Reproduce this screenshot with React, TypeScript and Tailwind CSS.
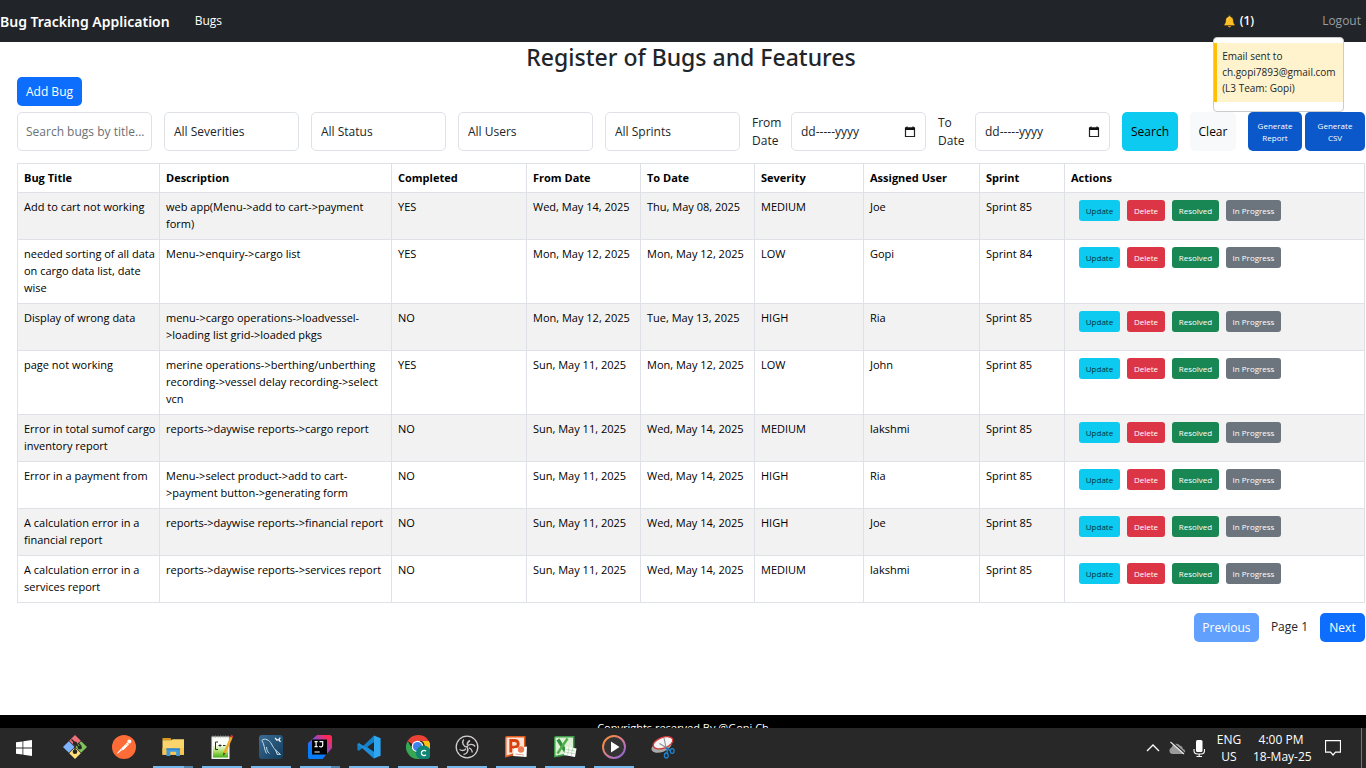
import type { ReactNode } from "react";

type Bug = {
  title: string;
  description: string;
  completed: string;
  from: string;
  to: string;
  severity: string;
  user: string;
  sprint: string;
};

const bugs: Bug[] = [
  { title: "Add to cart not working", description: "web app(Menu->add to cart->payment form)", completed: "YES", from: "Wed, May 14, 2025", to: "Thu, May 08, 2025", severity: "MEDIUM", user: "Joe", sprint: "Sprint 85" },
  { title: "needed sorting of all data on cargo data list, date wise", description: "Menu->enquiry->cargo list", completed: "YES", from: "Mon, May 12, 2025", to: "Mon, May 12, 2025", severity: "LOW", user: "Gopi", sprint: "Sprint 84" },
  { title: "Display of wrong data", description: "menu->cargo operations->loadvessel->loading list grid->loaded pkgs", completed: "NO", from: "Mon, May 12, 2025", to: "Tue, May 13, 2025", severity: "HIGH", user: "Ria", sprint: "Sprint 85" },
  { title: "page not working", description: "merine operations->berthing/unberthing recording->vessel delay recording->select vcn", completed: "YES", from: "Sun, May 11, 2025", to: "Mon, May 12, 2025", severity: "LOW", user: "John", sprint: "Sprint 85" },
  { title: "Error in total sumof cargo inventory report", description: "reports->daywise reports->cargo report", completed: "NO", from: "Sun, May 11, 2025", to: "Wed, May 14, 2025", severity: "MEDIUM", user: "lakshmi", sprint: "Sprint 85" },
  { title: "Error in a payment from", description: "Menu->select product->add to cart->payment button->generating form", completed: "NO", from: "Sun, May 11, 2025", to: "Wed, May 14, 2025", severity: "HIGH", user: "Ria", sprint: "Sprint 85" },
  { title: "A calculation error in a financial report", description: "reports->daywise reports->financial report", completed: "NO", from: "Sun, May 11, 2025", to: "Wed, May 14, 2025", severity: "HIGH", user: "Joe", sprint: "Sprint 85" },
  { title: "A calculation error in a services report", description: "reports->daywise reports->services report", completed: "NO", from: "Sun, May 11, 2025", to: "Wed, May 14, 2025", severity: "MEDIUM", user: "lakshmi", sprint: "Sprint 85" },
];

const columns = [
  { label: "Bug Title", width: "w-[142px]" },
  { label: "Description", width: "w-[232px]" },
  { label: "Completed", width: "w-[135px]" },
  { label: "From Date", width: "w-[114px]" },
  { label: "To Date", width: "w-[114px]" },
  { label: "Severity", width: "w-[109px]" },
  { label: "Assigned User", width: "w-[116px]" },
  { label: "Sprint", width: "w-[85px]" },
  { label: "Actions", width: "" },
];

const actions = [
  { label: "Update", style: "w-[41px] bg-[#0dcaf0] text-[#03323c]" },
  { label: "Delete", style: "w-[38px] bg-[#dc3545] text-white" },
  { label: "Resolved", style: "w-[47px] bg-[#198754] text-white" },
  { label: "In Progress", style: "w-[55px] bg-[#6c757d] text-white" },
];

const cell = "border border-[#dee2e6] pt-[5px] pr-[2px] pb-[7px] pl-[6px] text-left align-top";
const headCell = "border border-[#dee2e6] pt-[5px] pr-[2px] pb-[6px] pl-[6px] text-left font-bold";
const field = "h-[39px] min-w-0 flex-[1_1_135px] rounded-[5px] border border-[#dee2e6] bg-white";

function BellIcon() {
  return (
    <svg width="13" height="13" viewBox="0 0 13 13" aria-hidden="true">
      <path d="M6.5 0.6c.8 0 1.200.5 1.300 1.100 1.700.5 2.500 1.900 2.600 3.800.1 2 .6 3 1.500 4.200v1H1.100v-1c.9-1.200 1.400-2.200 1.500-4.200.1-1.900.9-3.300 2.600-3.800C5.300 1.100 5.700.6 6.500.6z" fill="#fcbf29" stroke="#15171a" strokeWidth=".6" />
      <path d="M4.900 11h3.200c-.2.900-.8 1.400-1.600 1.400S5.100 11.900 4.900 11z" fill="#e8921c" />
      <path d="M4 5c.1-1.200.6-2 1.500-2.400" stroke="#ffe27a" strokeWidth=".8" fill="none" />
    </svg>
  );
}

function Select({ label }: { label: string }) {
  return (
    <select aria-label={label} className={`${field} appearance-none px-[9px] text-[#212529]`}>
      <option>{label}</option>
    </select>
  );
}

function DateField({ id, label, width }: { id: string; label: string; width: string }) {
  return (
    <>
      <label htmlFor={id} className={`shrink-0 leading-[18px] ${width}`}>
        {label}
      </label>
      <div className={`${field} flex items-center px-[9px]`}>
        <input id={id} type="text" defaultValue="dd-----yyyy" className="min-w-0 flex-1 bg-transparent" />
        <button type="button" aria-label={`Pick ${label}`}>
          <svg width="12" height="12" viewBox="0 0 12 12" fill="none" className="block">
            <path d="M1.500 2h9v8.500h-9z" stroke="#222" strokeWidth="1.200" />
            <path d="M1 1.500h10V4H1z" fill="#111" />
            <path d="M3 0.400v2M9 0.400v2" stroke="#111" strokeWidth="1.300" />
          </svg>
        </button>
      </div>
    </>
  );
}

const apps: { name: string; state: "idle" | "open" | "stacked"; icon: ReactNode }[] = [
  {
    name: "Git Bash",
    state: "idle",
    icon: (
      <>
        <path d="M12 0l5.800 5.800L12 11.600 6.200 5.800z" fill="#ef7078" />
        <path d="M5.800 6.200l5.800 5.800-5.800 5.800L0 12z" fill="#80b3ff" />
        <path d="M18.200 6.200L24 12l-5.800 5.800-5.800-5.800z" fill="#7fc35a" />
        <path d="M12 12.400l5.800 5.800L12 24l-5.800-5.800z" fill="#ffe27c" />
        <path d="M8.500 4.500l3.500 3.500v8.500M12 8.500l4.500 4M15 8l3 3" stroke="#262626" strokeWidth="1.300" fill="none" />
        <circle cx="12" cy="8.500" r="2.100" fill="#262626" />
        <circle cx="12" cy="16.800" r="2.300" fill="#262626" />
        <circle cx="16.800" cy="12.500" r="2.100" fill="#262626" />
      </>
    ),
  },
  {
    name: "Postman",
    state: "idle",
    icon: (
      <>
        <circle cx="12" cy="12" r="12" fill="#ff6c37" />
        <circle cx="17.300" cy="6.400" r="2" fill="#fff" />
        <path d="M15.200 7.600l1.900 1.600-5.300 5.600-2.300.6-3.800 3.300-.7-.5 4.200-4.600z" fill="#fff" />
        <path d="M8.800 13.500l1.600 1.700M14 8.800l1.600 1.600" stroke="#ff9a72" strokeWidth=".7" />
      </>
    ),
  },
  {
    name: "File Explorer",
    state: "stacked",
    icon: (
      <>
        <path d="M1.500 3h8l1.500 2.500H1.500z" fill="#d99a1c" />
        <path d="M1.500 5.300h9l1.200-1.100H23v15.600H1.500z" fill="#fcd46c" />
        <path d="M1.500 13H23v6.800H1.500z" fill="#f8c650" />
        <path d="M5.500 21v-7.600H19V21h-3.800v-4.300H9.300V21z" fill="#3f9be0" />
        <path d="M5.500 13.400H19v1.500H5.500z" fill="#2f86cc" />
      </>
    ),
  },
  {
    name: "Notepad++",
    state: "open",
    icon: (
      <>
        <defs>
          <linearGradient id="npp" x1="0" y1="0" x2="0" y2="1">
            <stop offset=".35" stopColor="#fbfdf8" />
            <stop offset=".7" stopColor="#a8df5e" />
            <stop offset="1" stopColor="#44ad1c" />
          </linearGradient>
        </defs>
        <path d="M1.500 1.500h18V24h-18z" fill="#f4f4ee" />
        <path d="M3 3h15v19.500H3z" fill="url(#npp)" />
        <path d="M3 .5v2M5.500 .5v2M8 .5v2M10.500 .5v2M13 .5v2M15.500 .5v2M18 .5v2" stroke="#9a9a9a" strokeWidth=".9" />
        <path d="M8 7H5.500v7.500H8M8.500 10.500h3M10 9.300v2.400M13 10.500h2.500" stroke="#2b2b2b" strokeWidth="1" fill="none" />
        <path d="M21.600 2L14.500 18" stroke="#eda928" strokeWidth="2.500" />
        <path d="M22.300.400l-.9 2" stroke="#cf3535" strokeWidth="2.600" />
        <path d="M13.300 17.500l2.300 1-2.500 2.300z" fill="#54411c" />
      </>
    ),
  },
  {
    name: "MySQL Workbench",
    state: "open",
    icon: (
      <>
        <defs>
          <linearGradient id="sql" x1="0" y1="0" x2="1" y2="1">
            <stop stopColor="#3a6c94" />
            <stop offset="1" stopColor="#123d5d" />
          </linearGradient>
        </defs>
        <rect width="24" height="24" rx="3" fill="url(#sql)" />
        <path d="M7.500 18.500C5 14.500 5.500 8.500 2.800 5.500 5.500 2.500 10.500 5 12.500 9c1.500 3 2.500 4.500 4 6l5 4.500-3.300-.3M16.500 15l2 5M7.500 12c.3 3 1 5 3 6.500" fill="none" stroke="#c4dbe8" strokeWidth="1" />
        <path d="M16 2.800l1.800 2.200 2-.4 1.700 2.300M19.800 4.600l1.500-2" fill="none" stroke="#fff" strokeWidth="1.200" />
      </>
    ),
  },
  {
    name: "IntelliJ IDEA",
    state: "stacked",
    icon: (
      <>
        <defs>
          <linearGradient id="idea" x1="0" y1="1" x2="1" y2="0">
            <stop offset=".25" stopColor="#087cfa" />
            <stop offset=".55" stopColor="#8a4ccf" />
            <stop offset=".85" stopColor="#fe2857" />
          </linearGradient>
        </defs>
        <path d="M9 0h12.500Q24 0 24 2.500V13l-9.500 11H2.500Q0 24 0 21.500V8z" fill="url(#idea)" />
        <path d="M0 12v9.500Q0 24 2.500 24h12l3-5H4z" fill="#087cfa" />
        <path d="M4 4.500h15v15H4z" fill="#000" />
        <path d="M6.500 6.700h3.200M8.100 6.700v5M6.500 11.700h3.200M11.500 6.700h3.200v3.600c0 1.800-2.400 1.900-3.400.8M6.500 17h5.200" stroke="#fff" strokeWidth="1.200" fill="none" />
      </>
    ),
  },
  {
    name: "Visual Studio Code",
    state: "open",
    icon: (
      <>
        <path d="M17 .4L5.800 11.200 2 8.200.4 9v6l1.600.8 3.800-3L17 23.600V17l-6.700-5L17 7z" fill="#1580c8" />
        <path d="M2 8.200L.4 9.100 17 23.600V17z" fill="#1e8ed8" />
        <path d="M17 .4l6.600 2.900v17.400L17 23.600z" fill="#2fa6f0" />
      </>
    ),
  },
  {
    name: "Google Chrome",
    state: "open",
    icon: (
      <>
        <path d="M12 0A12 12 0 0 1 22.800 6H12A6 6 0 0 0 6.700 9.200L1.600 6A12 12 0 0 1 12 0z" fill="#ea4335" />
        <path d="M22.800 6A12 12 0 0 1 11.500 24l5.700-9A6 6 0 0 0 16 6z" fill="#fbc116" />
        <path d="M1.600 6A12 12 0 0 0 12 24l5-9c-3 4-8 3.500-10 0z" fill="#34a853" />
        <circle cx="11.500" cy="11.500" r="5.800" fill="#fff" />
        <circle cx="11.500" cy="11.500" r="4.600" fill="#3f82ef" />
        <circle cx="17.500" cy="18" r="7.600" fill="#118573" />
        <path d="M19.900 16.200c-1.500-1.500-4.500-.7-4.500 1.800s3 3.300 4.500 1.800" fill="none" stroke="#fff" strokeWidth="1.300" />
      </>
    ),
  },
  {
    name: "OBS Studio",
    state: "open",
    icon: (
      <>
        <circle cx="12" cy="12" r="10.800" fill="#211f20" stroke="#d0d0d0" strokeWidth="1.300" />
        <g fill="none" stroke="#c8c8c8" strokeWidth="1.400">
          <path d="M8.700 4.500C6.500 7.500 8.200 11.500 12 12" />
          <path d="M20.200 11.500C18 8.500 13.500 8.700 12 12" />
          <path d="M8.500 19.500C12 19.500 14.200 15.500 12 12" />
          <path d="M4.500 14.500c2.500 1.500 5 1 6.500-.8M17.200 17.500c0-2.500-1.200-4-3.500-4.700M15 5.500c-2 1-3 2.500-2.700 4.700" />
        </g>
      </>
    ),
  },
  {
    name: "PowerPoint",
    state: "open",
    icon: (
      <>
        <path d="M1 3Q1 1 3 1h18.500v17L1 22.500z" fill="#e2591e" />
        <path d="M2.500 2.500H20V15L2.500 20.500z" fill="#fbe3d6" />
        <path d="M6.800 17.500V5.500h3.700c5 0 5 6.600 0 6.600H7" fill="none" stroke="#d8410e" strokeWidth="2.800" />
        <path d="M10 13.500l13-2-.5 10.500L9 21z" fill="#fff" />
        <circle cx="17" cy="14.500" r="3.200" fill="#ee7d55" />
        <path d="M11.500 19l8.500 1" stroke="#e9a287" strokeWidth="1" />
      </>
    ),
  },
  {
    name: "Excel",
    state: "open",
    icon: (
      <>
        <path d="M1 3Q1 1 3 1h18.500v18L1 22.500z" fill="#3b9b46" />
        <path d="M2.500 2.500H20V17L2.500 20.800z" fill="#dcf0d3" />
        <path d="M5 4.500l8.200 13" stroke="#2f913c" strokeWidth="3.400" />
        <path d="M14.500 3.500l-10 15" stroke="#51ae4b" strokeWidth="2.400" />
        <path d="M12.500 11.500l11 2-1.500 8.500-11-2z" fill="#fff" />
        <path d="M12.500 14.200l10 1.900M12 17l10 1.900M16 12.200l-1.500 8.300M19.700 12.900L18.200 21" stroke="#a3cf9f" strokeWidth=".7" />
      </>
    ),
  },
  {
    name: "Media Player",
    state: "open",
    icon: (
      <>
        <defs>
          <linearGradient id="media" x1="0" y1="0" x2="1" y2="1">
            <stop offset=".2" stopColor="#f28a4a" />
            <stop offset=".6" stopColor="#c878a8" />
            <stop offset="1" stopColor="#8560dc" />
          </linearGradient>
        </defs>
        <circle cx="12" cy="12" r="11" fill="#343434" stroke="url(#media)" strokeWidth="1.900" />
        <path d="M9 6.500l8.500 5.500L9 17.500z" fill="#fff" />
      </>
    ),
  },
  {
    name: "Snipping Tool",
    state: "idle",
    icon: (
      <>
        <ellipse cx="10.500" cy="11.500" rx="10.500" ry="5.500" transform="rotate(-20 10.500 11.500)" fill="#a9a9a9" />
        <ellipse cx="12" cy="7.800" rx="10.300" ry="5.300" transform="rotate(-20 12 7.800)" fill="#f4f4f4" stroke="#d33a3a" strokeWidth="1.300" />
        <path d="M13 3l2 9.500M8.500 8.500l7.500 4.500" stroke="#8a8f94" strokeWidth="1.100" />
        <path d="M14.500 13l5 2.500M16.500 12.500l-.5 6" stroke="#1d78c0" strokeWidth="1.600" />
        <ellipse cx="21.200" cy="16" rx="1.900" ry="2.400" fill="none" stroke="#1d84cf" strokeWidth="1.300" />
        <ellipse cx="15.300" cy="20.500" rx="1.900" ry="2.500" fill="none" stroke="#1d84cf" strokeWidth="1.300" />
      </>
    ),
  },
];

function Taskbar() {
  return (
    <div className="flex h-[40px] items-stretch bg-[#282828] text-white">
      <button type="button" aria-label="Start" className="flex w-[50px] items-center justify-start pl-[16px]">
        <svg width="16" height="16" viewBox="0 0 16 16" fill="#fff" aria-hidden="true">
          <path d="M0 2.300l6.500-.9v6.200H0zM7.300 1.200L16 0v7.600H7.300zM0 8.400h6.500v6.200L0 13.700zM7.300 8.400H16V16l-8.700-1.200z" />
        </svg>
      </button>
      {apps.map((app) => (
        <button key={app.name} type="button" aria-label={app.name} className="flex w-[49px] flex-col items-center">
          <span className="flex flex-1 items-center">
            <svg width="24" height="24" viewBox="0 0 24 24" aria-hidden="true">
              {app.icon}
            </svg>
          </span>
          <span className="flex h-[2px] w-[40px]">
            {app.state !== "idle" && <span className="flex-1 bg-[#76b9ed]" />}
            {app.state === "stacked" && <span className="w-[9px] bg-[#5585aa]" />}
          </span>
        </button>
      ))}
      <div className="ml-auto flex items-center text-[12px] leading-[17px]">
        <button type="button" aria-label="Show hidden icons">
          <svg width="14" height="8" viewBox="0 0 14 8" fill="none" aria-hidden="true">
            <path d="M1 7l6-6 6 6" stroke="#fff" strokeWidth="1.300" />
          </svg>
        </button>
        <svg width="18" height="16" viewBox="0 0 18 16" fill="none" className="ml-[8px]" aria-hidden="true">
          <path d="M4 14a3.400 3.400 0 0 1-.4-6.500A4.800 4.800 0 0 1 12 5.500a4 4 0 0 1 3 3.500 2.600 2.600 0 0 1 .5 5z" fill="#9a9a9a" />
          <path d="M3.500 1.500l13.500 12" stroke="#282828" strokeWidth="1.400" />
          <path d="M2.500 2l13.500 12" stroke="#e8e8e8" strokeWidth="1.100" />
        </svg>
        <svg width="12" height="17" viewBox="0 0 12 17" fill="none" className="ml-[7px]" aria-hidden="true">
          <rect x="3" y="0" width="6.500" height="12" rx="1.500" fill="#fff" />
          <path d="M1 9v1.500Q1 14 4.500 14h3.500Q11.500 14 11.500 10.500V9M6.200 14v2.500M3.500 16.500h5.500" stroke="#fff" strokeWidth="1.100" />
        </svg>
        <div className="w-[48px] text-center">
          ENG
          <br />
          US
        </div>
        <div className="w-[56px] text-center whitespace-nowrap">
          4:00 PM
          <br />
          18-May-25
        </div>
        <button type="button" aria-label="Notifications" className="mr-[20px] ml-[16px]">
          <svg width="16" height="16" viewBox="0 0 16 16" fill="none" className="block" aria-hidden="true">
            <path d="M.5.600h15v11.500h-5L8 15l-2.500-2.900h-5z" stroke="#fff" strokeWidth="1.200" />
          </svg>
        </button>
        <span className="mr-[4px] h-[40px] w-px bg-[#747474]" />
      </div>
    </div>
  );
}

export default function App() {
  return (
    <div className="flex min-h-screen flex-col bg-white font-['Open_Sans','Noto_Sans',sans-serif] text-[12px] text-[#212529]">
      <nav className="flex h-[42px] items-center bg-[#212529] pr-[5px] text-white">
        <a href="#home" className="font-['Noto_Sans',sans-serif] text-[14px] font-semibold">
          Bug Tracking Application
        </a>
        <a href="#bugs" className="ml-[25px]">
          Bugs
        </a>
        <div className="relative mr-[68px] ml-auto">
          <button type="button" className="flex items-center gap-[4px] font-semibold">
            <BellIcon />
            (1)
          </button>
          <div className="absolute top-[25px] right-[-90px] z-10 h-[75px] w-[131px] rounded-[4px] border border-[#cccccc] bg-white pt-[5px]">
            <p className="border-l-[3px] border-[#ffc107] bg-[#fff3cd] px-[5px] pt-[5px] pb-[6px] text-[10px] leading-[16px] text-[#212529]">
              Email sent to
              <br />
              ch.gopi7893@gmail.com
              <br />
              (L3 Team: Gopi)
            </p>
          </div>
        </div>
        <a href="#logout" className="text-[#9b9da0]">
          Logout
        </a>
      </nav>

      <main className="flex flex-1 flex-col pr-px pl-[17px]">
        <h1 className="text-center font-['Noto_Sans',sans-serif] text-[23px] leading-[30px] font-medium">
          Register of Bugs and Features
        </h1>
        <button type="button" className="mt-[5px] h-[29px] w-[65px] rounded-[5px] bg-[#0d6efd] text-white">
          Add Bug
        </button>

        <form className="mt-[6px] flex items-center gap-[12px]">
          <input
            type="text"
            aria-label="Search bugs by title"
            placeholder="Search bugs by title..."
            className={`${field} pr-[4px] pl-[8px] placeholder:text-[#6c7074]`}
          />
          <Select label="All Severities" />
          <Select label="All Status" />
          <Select label="All Users" />
          <Select label="All Sprints" />
          <DateField id="from-date" label="From Date" width="w-[27px]" />
          <DateField id="to-date" label="To Date" width="w-[25px]" />
          <button type="button" className="h-[39px] w-[56px] shrink-0 rounded-[5px] bg-[#0dcaf0] text-black">
            Search
          </button>
          <button type="reset" className="h-[39px] w-[46px] shrink-0 rounded-[5px] bg-[#f8f9fa] text-black">
            Clear
          </button>
          <div className="flex shrink-0 gap-[3px] text-[8px] leading-[12px] text-white">
            <button type="button" className="h-[39px] w-[54px] rounded-[5px] bg-[#0a58ca] px-[8px]">
              Generate Report
            </button>
            <button type="button" className="h-[39px] w-[60px] rounded-[5px] bg-[#0a58ca] px-[8px]">
              Generate CSV
            </button>
          </div>
        </form>

        <table className="mt-[12px] w-full table-fixed border-collapse text-[11px] leading-[17px] text-black">
          <colgroup>
            {columns.map((column) => (
              <col key={column.label} className={column.width} />
            ))}
          </colgroup>
          <thead>
            <tr>
              {columns.map((column) => (
                <th key={column.label} scope="col" className={headCell}>
                  {column.label}
                </th>
              ))}
            </tr>
          </thead>
          <tbody>
            {bugs.map((bug) => (
              <tr key={bug.title} className="odd:bg-[#f2f2f2]">
                <td className={cell}>{bug.title}</td>
                <td className={cell}>{bug.description}</td>
                <td className={cell}>{bug.completed}</td>
                <td className={cell}>{bug.from}</td>
                <td className={cell}>{bug.to}</td>
                <td className={cell}>{bug.severity}</td>
                <td className={cell}>{bug.user}</td>
                <td className={cell}>{bug.sprint}</td>
                <td className={cell}>
                  <div className="flex gap-[7px] pt-[2px] pl-[8px] text-[8px] leading-[13px]">
                    {actions.map((action) => (
                      <button
                        key={action.label}
                        type="button"
                        className={`h-[21px] rounded-[3px] text-center whitespace-nowrap ${action.style}`}
                      >
                        {action.label}
                      </button>
                    ))}
                  </div>
                </td>
              </tr>
            ))}
          </tbody>
        </table>

        <div className="mt-[10px] flex items-start justify-end gap-[12px]">
          <button type="button" disabled className="h-[29px] w-[65px] rounded-[5px] bg-[#62a0fe] text-white">
            Previous
          </button>
          <span className="leading-[28px]">Page 1</span>
          <button type="button" className="h-[29px] w-[45px] rounded-[5px] bg-[#0d6efd] text-white">
            Next
          </button>
        </div>
      </main>

      <footer className="h-[13px] overflow-hidden bg-black pt-[4px] text-center text-[11px] leading-[17px] text-white">
        Copyrights reserved By @Gopi.Ch
      </footer>
      <Taskbar />
    </div>
  );
}
